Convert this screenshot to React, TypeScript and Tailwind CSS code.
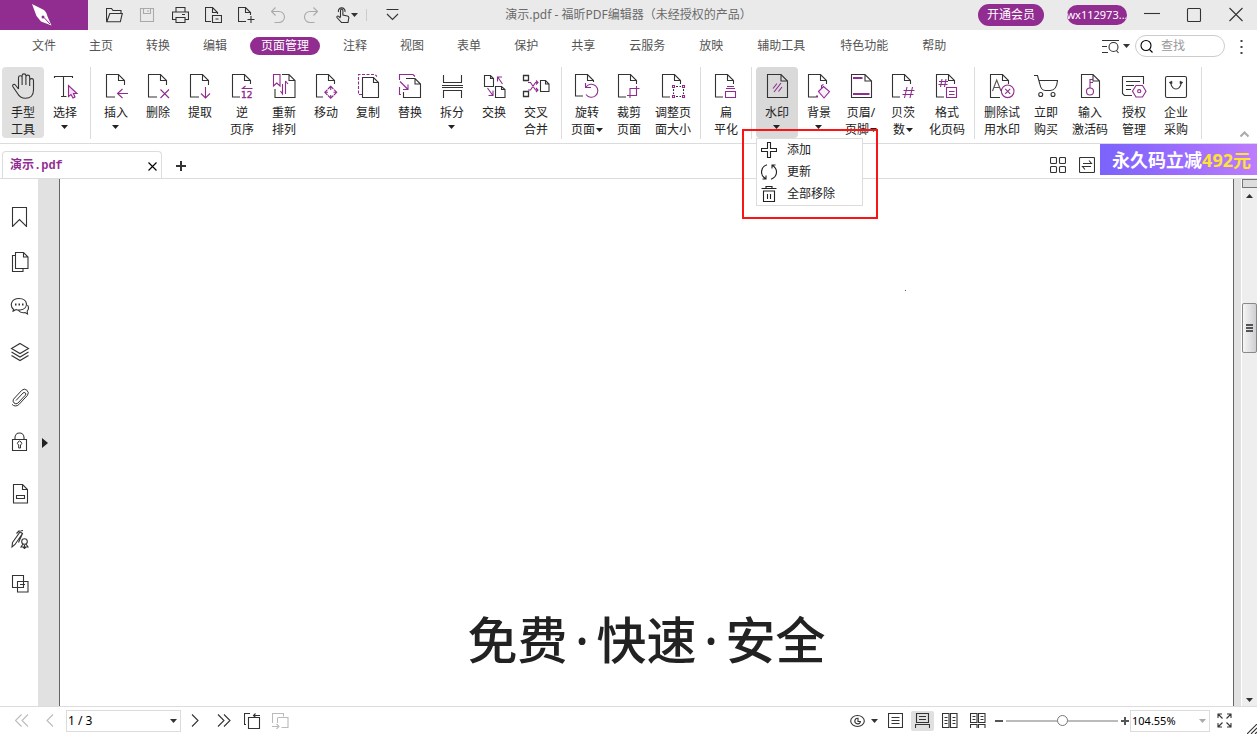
import { useState } from 'react';
import type { ReactNode } from 'react';
import clsx from 'clsx';

const PURPLE = '#8f2c8f';

type IconProps = { w: number; h: number; children: ReactNode };

const Icon = ({ w, h, children }: IconProps) => (
  <svg
    width={w}
    height={h}
    viewBox={`0 0 ${w} ${h}`}
    fill="none"
    stroke="currentColor"
    strokeWidth="1.1"
    className="block shrink-0"
    aria-hidden="true"
  >
    {children}
  </svg>
);

const Caret = () => (
  <svg width="7" height="4" viewBox="0 0 7 4" className="inline-block shrink-0" aria-hidden="true">
    <path d="M0 0h7L3.5 4z" fill="currentColor" />
  </svg>
);

// sheet with the lower right corner left open for a purple mark
const Sheet = () => <path d="M15 24H6.5V1.5h12l6 6V12M18.5 1.5v6h6" />;
const NarrowSheet = () => <path d="M13 24H5.5V1.5h12l6 6V11M17.5 1.5v6h6" />;
const FullSheet = () => <path d="M6.5 1.5H20l6.5 6.5v16.5h-20zM20 1.5V8h6.5" />;

type Tool = { id: string; lines: string[]; icon: ReactNode; caret?: 'below' | 'inline'; wide?: boolean };

const toolGroups: Tool[][] = [
  [
    {
      id: 'hand',
      lines: ['手型', '工具'],
      icon: (
        <path d="M11.5 16V4.5a1.8 1.8 0 0 1 3.6 0V12M15.1 12V2.8a1.9 1.9 0 0 1 3.8 0V12M18.9 12V4a1.9 1.9 0 0 1 3.8 0v9M22.7 13V7.5a1.9 1.9 0 0 1 3.8 0V17c0 5-3 8.3-8 8.3-4.5 0-6.5-2-8.3-5.3L5.8 13.5c-.8-2 1.4-3 2.6-1.5l3.1 4" />
      ),
    },
    {
      id: 'select',
      lines: ['选择'],
      caret: 'below',
      icon: (
        <>
          <path d="M5.5 5V3.5h18V5M14.5 3.5v20M12 23.5h5.5" />
          <path d="M19.5 12.5v11l2.5-2 2 3.5 2-1-1.5-3.5H28z" stroke={PURPLE} fill="#f6dcf6" />
        </>
      ),
    },
  ],
  [
    {
      id: 'insert',
      lines: ['插入'],
      caret: 'below',
      icon: <><Sheet /><path d="M28 20.5H18M22.5 16l-5 4.5 5 4.5" stroke={PURPLE} /></>,
    },
    {
      id: 'delete',
      lines: ['删除'],
      icon: <><Sheet /><path d="M18.5 16.5l8.500 8.500M27 16.500L18.500 25" stroke={PURPLE} /></>,
    },
    {
      id: 'extract',
      lines: ['提取'],
      icon: <><Sheet /><path d="M21.5 14v11M17 20.500l4.500 4.500 4.500-4.500" stroke={PURPLE} /></>,
    },
    {
      id: 'reverse',
      lines: ['逆', '页序'],
      icon: (
        <>
          <path d="M14 24H6.5V1.5h12l6 6V11M18.5 1.5v6h6" />
          <path d="M26.5 15.5h-10l3-2.500" stroke={PURPLE} />
          <text x="15" y="25" fontSize="9" fontFamily="DejaVu Sans" fill={PURPLE} stroke={PURPLE} strokeWidth="0.4">12</text>
        </>
      ),
    },
    {
      id: 'rearrange',
      lines: ['重新', '排列'],
      icon: (
        <>
          <path d="M14 1.5h7l6 6v17H7V16M21 1.5v6h6" />
          <path d="M5.5 1.5H12V13l-3.2-3-3.300 3zM14.500 11v10l-2-3M17.500 8v13M17.500 8l2.500 3" stroke={PURPLE} />
        </>
      ),
    },
    {
      id: 'move',
      lines: ['移动'],
      icon: (
        <>
          <path d="M13 24H6.5V1.5h12l6 6V11M18.5 1.5v6h6" />
          <path d="M18 16l2.7-2.7 2.7 2.7M18 22.5l2.7 2.7 2.7-2.7M17.5 16.700l-2.700 2.600 2.700 2.700M24 16.700l2.700 2.600L24 22M20.700 14v3M20.700 22v2.500M15.500 19.300h2.500M23.500 19.300H26" stroke={PURPLE} />
        </>
      ),
    },
    {
      id: 'copy',
      lines: ['复制'],
      icon: (
        <>
          <path d="M10 21.5H6.5v-20H23l2 2" stroke={PURPLE} strokeDasharray="3 1.5" />
          <path d="M10.5 4.5h11l5 5v15h-16zM21.5 4.5v5h5" />
        </>
      ),
    },
    {
      id: 'replace',
      lines: ['替换'],
      icon: (
        <>
          <path d="M5.5 7V1.5H19l2 2M5.5 14v7.5H7M6 8.5l8 8M14 11.5v5H9" stroke={PURPLE} />
          <path d="M12 5.5h9l5.5 5.5v13.5h-17V19M21 5.5V11h5.5" />
        </>
      ),
    },
    {
      id: 'split',
      lines: ['拆分'],
      caret: 'below',
      icon: <path d="M7.5 2v7.5h18V2M6 12.5h21M6 14.5h21M7.5 25v-7.5h18V25" />,
    },
    {
      id: 'swap',
      lines: ['交换'],
      icon: (
        <>
          <path d="M6.5 2.5h6l3 3v8h-9zM12.5 2.5v3h3M17.5 13.5h6l3.5 3v8h-9.5zM23.5 13.5v3H27" />
          <path d="M24.5 11L20 4.5M19.500 8.500V4H24M9.500 15l5 7M10.500 22.500H15v-5" stroke={PURPLE} />
        </>
      ),
    },
    {
      id: 'cross',
      lines: ['交叉', '合并'],
      icon: (
        <>
          <path d="M3.5 2.5h5v5h-5zM3.5 18.5h5v5h-5z" strokeWidth="1.3" />
          <path d="M20.5 7.5h5l3.5 3.5v7.5h-8.5zM25.5 7.5V11H29" />
          <path d="M8 9.5h2.5l5 7.5H18M8 17h2.5l5-7.5H18M16 7.5l2 2-2 2M16 15l2 2-2 2" stroke={PURPLE} />
        </>
      ),
    },
  ],
  [
    {
      id: 'rotate',
      lines: ['旋转', '页面'],
      caret: 'inline',
      icon: (
        <>
          <path d="M12 23H4.5V1.5h12l6 6V9M16.5 1.5v6h6" />
          <path d="M15 14a6.500 6.500 0 1 1 0 7.500M14.500 10v4.500H20" stroke={PURPLE} />
        </>
      ),
    },
    {
      id: 'crop',
      lines: ['裁剪', '页面'],
      icon: <><NarrowSheet /><path d="M14 22.500h9.500V13M26.500 15.500H17V25" stroke={PURPLE} /></>,
    },
    {
      id: 'resize',
      lines: ['调整页', '面大小'],
      wide: true,
      icon: (
        <>
          <NarrowSheet />
          <path d="M15.5 12.5h2v2h-2zM25.5 12.5h2v2h-2zM15.5 22.5h2v2h-2zM25.5 22.5h2v2h-2z" stroke={PURPLE} />
          <path d="M19 13.5h5M19 23.5h5M16.5 16v5M26.5 16v5" strokeDasharray="2 1.5" />
        </>
      ),
    },
  ],
  [
    {
      id: 'flatten',
      lines: ['扁', '平化'],
      icon: <><NarrowSheet /><path d="M17 13.5h7M16 15.5h9M15.5 18.5h10v6h-10z" stroke={PURPLE} /></>,
    },
  ],
  [
    {
      id: 'watermark',
      lines: ['水印'],
      caret: 'below',
      icon: <><FullSheet /><path d="M12 15.5l4-5M13 19l7-9M17.5 18.5l3.5-4.5" stroke={PURPLE} /></>,
    },
    {
      id: 'background',
      lines: ['背景'],
      caret: 'below',
      icon: (
        <>
          <NarrowSheet />
          <path d="M15.5 18.5l5-5 6 5-5.5 6.5zM18.5 15.500v-3l2-1" stroke={PURPLE} fill="#fbeffb" />
          <path d="M14 22.5v2" stroke={PURPLE} strokeWidth="2" />
        </>
      ),
    },
    {
      id: 'header',
      lines: ['页眉/', '页脚'],
      caret: 'inline',
      icon: <><FullSheet /><path d="M8 5h9.500M8 21h16.500" stroke={PURPLE} strokeWidth="2" /></>,
    },
    {
      id: 'bates',
      lines: ['贝茨', '数'],
      caret: 'inline',
      icon: <><NarrowSheet /><path d="M20 14l-2.500 11M25.500 14L23 25M16.500 17.500h11M15.500 21.500h11" stroke={PURPLE} /></>,
    },
    {
      id: 'format',
      lines: ['格式', '化页码'],
      wide: true,
      icon: (
        <>
          <NarrowSheet />
          <path d="M11 6l-1.500 8M15 6l-1.500 8M8 8.500h9M7.500 11.500h9M15.500 14.500h10v10h-10zM18 18.500h5.500M18 21.500h5.500" stroke={PURPLE} />
        </>
      ),
    },
  ],
  [
    {
      id: 'trial',
      lines: ['删除试', '用水印'],
      wide: true,
      icon: (
        <>
          <path d="M14 24.5H4.5v-23h12l6 6V11M16.5 1.5v6h6" />
          <path d="M6.5 18l4.2-11L15 18M8 14.5h5.500" stroke="#555" />
          <circle cx="21.7" cy="18.3" r="6.3" stroke={PURPLE} />
          <path d="M19.2 15.8l5 5M24.2 15.8l-5 5" stroke={PURPLE} />
        </>
      ),
    },
    {
      id: 'buy',
      lines: ['立即', '购买'],
      icon: (
        <>
          <path d="M4 2.5h3.500l2.500 9c.7 3.800 2.500 6 5.500 6H20c4 0 7-3.500 7.500-10H9" />
          <circle cx="10.7" cy="21.5" r="2" />
          <circle cx="23" cy="21.5" r="2" />
        </>
      ),
    },
    {
      id: 'activate',
      lines: ['输入', '激活码'],
      wide: true,
      icon: (
        <>
          <path d="M7.5 1.5H19L25.500 8v16.500h-18zM19 1.500V8h6.500" />
          <path d="M16 15V6.5h3M16 9.5h3" stroke={PURPLE} />
          <circle cx="16" cy="18.5" r="3.5" stroke={PURPLE} />
        </>
      ),
    },
    {
      id: 'license',
      lines: ['授权', '管理'],
      icon: (
        <>
          <path d="M14 22.5H6.5l-2-2v-17h21V11M8 8.5h14M8 12.5h8M8 16.5h5" />
          <path d="M18 12.5h6.5l3.5 5.700-3.500 5.800H18l-3.500-5.800z" stroke={PURPLE} />
          <circle cx="21.2" cy="18.2" r="1.6" stroke={PURPLE} />
        </>
      ),
    },
    {
      id: 'enterprise',
      lines: ['企业', '采购'],
      icon: (
        <>
          <rect x="5.5" y="3.5" width="21" height="21" rx="1.5" />
          <path d="M10.5 9.5c1 4.500 3 6.500 5.500 6.500s4.500-2 5.500-6.500" />
          <path d="M9 9.500L12 8v3zM23 9.500L20 8v3z" fill="currentColor" strokeWidth="0.5" />
        </>
      ),
    },
  ],
];

const quickActions = [
  { label: '打开', icon: <path d="M.5 14.5v-13h5l1.5 2h8v3M.8 14.800l3-8.300h12.500l-2 8.300z" /> },
  { label: '保存', muted: true, icon: <path d="M1.5 1.5h13v13h-13zM4.5 1.5v5h7v-5M8 4h2" /> },
  { label: '打印', icon: <path d="M4 5V.5h9V5M4 12.5H.5V5h16v7.5H13M4 10.5h9v5H4zM10 7.5h3" /> },
  { label: '导出', icon: <path d="M6 14.5H.5V.5h7l5 5V7M7.5.5v5h5M7.5 8.5h9v7h-9zM10.5 12h3" /> },
  { label: '新建', icon: <path d="M8 14.5H.5V.5h7l5 5V8M7.5.5v5h5M13 9v7M9.5 12.5h7" /> },
  { label: '撤销', muted: true, icon: <path d="M3.5 15.5H8a5.500 5.500 0 0 0 0-11H.5M4.5.5l-4 4 4 4" /> },
  { label: '重做', muted: true, icon: <path d="M10.5 15.5H6a5.500 5.500 0 0 1 0-11h7.500M9.500.5l4 4-4 4" /> },
];

const menus = ['文件', '主页', '转换', '编辑', '页面管理', '注释', '视图', '表单', '保护', '共享', '云服务', '放映', '辅助工具', '特色功能', '帮助'];

const watermarkActions = [
  { label: '添加', icon: <path d="M6.500.5h3v6h6v3h-6v6h-3v-6h-6v-3h6z" /> },
  {
    label: '更新',
    icon: <path d="M6 .8C2.500 2 .5 4.500.5 8c0 3 1.500 5 4 6.500M1.500 15H5v-3.500M10 15.200c3.500-1.200 5.500-3.700 5.500-7.200 0-3-1.500-5-4-6.500M14.500 1H11v3.500" />,
  },
  { label: '全部移除', icon: <path d="M.5 2.500h15M5 2.500v-2h6v2M2.500 5v10.500h11V5zM6.500 8v5M9.500 8v5" /> },
];

const panels = [
  { label: '书签', icon: <path d="M2.5.5h14v19l-7-7-7 7z" /> },
  { label: '页面', icon: <path d="M5.5.5h8L18 5v11.500H5.500zM13.500.5V5H18M5.500 3.500h-3v16h10.500v-3" /> },
  {
    label: '注释',
    icon: (
      <>
        <path d="M4 13C-.5 9.500.5 1.500 9 1.500c9.500 0 10 10.500 1 11.500-1.500.2-3 0-4-.5l-3.500 2zM8.500 13.500c1.500 2 4 2.500 6.500 2l2.500 1.500-.3-3c1.800-2 1.300-4.500.3-6" />
        <path d="M5 7.500h1.500M8.500 7.500H10M12 7.500h1.500" strokeWidth="1.8" />
      </>
    ),
  },
  { label: '图层', icon: <path d="M10 1.500l8.500 5-8.500 5-8.500-5zM1.500 10l8.500 5 8.500-5M1.500 13.500l8.500 5 8.500-5" /> },
  {
    label: '附件',
    icon: (
      <path
        d="M6 13.500l7-7.500a1.600 1.600 0 0 1 2.400 2.200l-7.600 8a3 3 0 0 1-4.300-4l8.200-8.800a3.800 3.800 0 0 1 5.700 5l-8.600 9.200a4.600 4.600 0 0 1-6.700-.2"
        strokeWidth="1"
      />
    ),
  },
  {
    label: '安全',
    icon: (
      <>
        <path d="M2.500 7.500h14v11h-14zM5 7.500v-2a4.500 4.500 0 0 1 9 0v2" />
        <path d="M8.700 13a2 2 0 1 1 1.800 0v3H8.700z" strokeWidth="1" />
      </>
    ),
  },
  { label: '字段', gap: true, icon: <path d="M3.500.5h9l5 5v13.500h-14zM12.500.5v5h5M6.500 11.500h8v3h-8z" /> },
  {
    label: '签名',
    icon: (
      <>
        <path d="M2.500 13.500L10 3l2.500 1.500L5 15.500l-3 2.500zM6.500 4.500l3-3M8.500 13.500l4-9M10.500 2l2.500-.5" />
        <circle cx="14.500" cy="12.500" r="2.800" />
        <path d="M13 15l-2 3h2l1 1 .5-3 .5 3 1-1h2l-2-3" />
      </>
    ),
  },
  { label: '对比', icon: <path d="M7.500 13.500h-5v-12h11v6M7.500 7.500H18V18H7.500zM10 10.500h5M7.500 13.500h6v-6" /> },
];

const SmallButton = ({ label, className, children }: { label: string; className?: string; children: ReactNode }) => (
  <button type="button" aria-label={label} className={clsx('flex shrink-0 items-center justify-center', className)}>
    {children}
  </button>
);

const TitleBar = () => (
  <header className="flex h-[30px] shrink-0 bg-[#eaeaea] text-[#333]">
    <div className="flex flex-1 basis-0 items-center">
      <div className="flex h-full w-[88px] items-center justify-center bg-[#912d91]">
        <svg width="24" height="24" viewBox="0 0 24 24" className="mr-1" aria-label="福昕">
          <path d="M2 1l12 6c2 2 3 4 3.500 6.500L21.500 22.500 11 18.500 6.500 13z" fill="#fff" />
          <path d="M20 21l-6-6.500" stroke="#912d91" strokeWidth="1" />
          <circle cx="13" cy="14" r="1.5" fill="#912d91" />
        </svg>
      </div>
      <div className="flex h-full items-center pl-[10px]">
        {quickActions.map((a) => (
          <SmallButton key={a.label} label={a.label} className={clsx('h-full w-[33px]', a.muted && 'text-[#aaa]')}>
            <Icon w={17} h={16}>{a.icon}</Icon>
          </SmallButton>
        ))}
        <SmallButton label="触摸模式" className="h-full w-9 gap-px">
          <Icon w={14} h={16}>
            <path d="M4.5 10V3.500a1.200 1.200 0 0 1 2.400 0V8l4.500 1c1.200.3 1.600 1 1.400 2l-.8 4.500H5.500L1 10.500c-.5-1.200.8-2 1.700-1.200L4.500 11M2.500 5a3.300 3.300 0 1 1 6.400 0" />
          </Icon>
          <Caret />
        </SmallButton>
        <span className="ml-px h-3 w-px bg-[#ccc]" />
        <SmallButton label="自定义工具栏" className="h-full w-[51px]">
          <Icon w={13} h={12}>
            <path d="M.5.5h12M1 5l5.500 5.500L12 5" />
          </Icon>
        </SmallButton>
      </div>
    </div>
    <h1 className="self-center text-[12px] leading-4 whitespace-nowrap text-[#6a6a6a]">
      演示.pdf - 福昕PDF编辑器（未经授权的产品）
    </h1>
    <div className="flex flex-1 basis-0 items-center justify-end">
      <button type="button" className="h-[22px] w-[66px] shrink-0 rounded-full bg-[#912d91] text-[12px] leading-4 text-white">
        开通会员
      </button>
      <button
        type="button"
        className="mr-1 ml-[23px] flex h-5 w-[60px] shrink-0 items-center justify-center overflow-hidden rounded-full bg-[#912d91] text-[11px] leading-4 text-white"
      >
        wx112973...
      </button>
      <SmallButton label="最小化" className="h-full w-[42px]">
        <Icon w={16} h={16}><path d="M0 6.500h16" /></Icon>
      </SmallButton>
      <SmallButton label="最大化" className="h-full w-[42px]">
        <Icon w={16} h={16}><rect x="1.5" y="1.5" width="13" height="13" rx="1" /></Icon>
      </SmallButton>
      <SmallButton label="关闭" className="h-full w-[42px]">
        <Icon w={16} h={16}><path d="M1.500 1l13 13M14.500 1l-13 13" /></Icon>
      </SmallButton>
    </div>
  </header>
);

const MenuBar = () => (
  <div className="flex h-8 shrink-0 items-center">
    <nav className="flex gap-[33px] pl-8 text-[12px] leading-4 whitespace-nowrap text-[#555]">
      {menus.map((m) => (
        <button
          key={m}
          type="button"
          className={clsx(
            m === '页面管理' ? '-mx-[10px] -my-px rounded-full bg-[#912d91] px-[11px] py-px text-white' : m.length > 2 && 'px-px',
          )}
        >
          {m}
        </button>
      ))}
    </nav>
    <div className="ml-auto flex items-center">
      <SmallButton label="查找选项" className="mr-[5px] gap-1 text-[#333]">
        <Icon w={17} h={16}>
          <path d="M0 2.500h17M0 8.500h5M0 14.500h6" />
          <circle cx="11.500" cy="9" r="4.500" />
          <path d="M14.500 12.500l2 2.500" />
        </Icon>
        <Caret />
      </SmallButton>
      <label className="flex h-[22px] w-[90px] items-center rounded-full border border-[#ccc] bg-white pl-1">
        <Icon w={13} h={14}>
          <circle cx="6" cy="6.500" r="5" />
          <path d="M9.500 10.500l3 3" />
        </Icon>
        <input
          type="text"
          aria-label="查找"
          placeholder="查找"
          className="ml-2 h-4 w-[60px] min-w-0 bg-transparent text-[12px] leading-4 outline-none placeholder:text-[#999]"
        />
      </label>
      <SmallButton label="更多" className="h-5 w-8">
        <svg width="3" height="15" viewBox="0 0 3 15" fill="#444" aria-hidden="true">
          <path d="M.5 1h2v2h-2zM.5 7h2v2h-2zM.5 13h2v2h-2z" />
        </svg>
      </SmallButton>
    </div>
  </div>
);

const Ribbon = () => {
  const [menuOpen, setMenuOpen] = useState(true);

  return (
    <div className="flex h-[82px] shrink-0 border-b border-[#dcdcdc] pt-[5px] pl-[2px]">
      {toolGroups.map((group) => (
        <div key={group[0].id} className="flex shrink-0">
          {group.map((tool) => {
            const isWatermark = tool.id === 'watermark';
            return (
              <div key={tool.id} className="relative">
                <button
                  type="button"
                  onClick={isWatermark ? () => setMenuOpen(!menuOpen) : undefined}
                  className={clsx(
                    'flex h-[71px] flex-col items-center rounded-sm pt-[6px] text-[#333]',
                    tool.wide ? 'w-[46px]' : 'w-[42px]',
                    tool.id === 'hand' && 'bg-[#e0e0e0]',
                    isWatermark && 'bg-[#d9d9d9]',
                  )}
                >
                  <Icon w={32} h={26}>{tool.icon}</Icon>
                  <span className="mt-[5px] block text-[12px] leading-[17px] whitespace-nowrap text-[#222]">
                    <span className="block">{tool.lines[0]}</span>
                    {tool.lines[1] && (
                      <span className="flex items-center justify-center gap-px">
                        {tool.lines[1]}
                        {tool.caret === 'inline' && <Caret />}
                      </span>
                    )}
                    {tool.caret === 'below' && (
                      <span className="flex h-3 items-center justify-center"><Caret /></span>
                    )}
                  </span>
                </button>
                {isWatermark && menuOpen && (
                  <>
                    <div role="menu" className="absolute top-[71px] left-0 z-10 w-[107px] border border-[#dcdcdc] bg-white">
                      {watermarkActions.map((a) => (
                        <button
                          key={a.label}
                          type="button"
                          role="menuitem"
                          className="flex h-[22px] w-full items-center gap-[10px] pl-1 text-[12px] leading-4 whitespace-nowrap text-[#222]"
                        >
                          <Icon w={16} h={16}>{a.icon}</Icon>
                          {a.label}
                        </button>
                      ))}
                    </div>
                    <div className="pointer-events-none absolute top-[62px] -left-[14px] z-20 h-[90px] w-[136px] border-2 border-[#fb1414]" />
                  </>
                )}
              </div>
            );
          })}
          <span className="mx-1 h-[72px] w-px bg-[#dcdcdc]" />
        </div>
      ))}
      <SmallButton label="折叠功能区" className="mr-2 mb-1 ml-auto self-end text-[#aaa]">
        <svg width="9" height="9" viewBox="0 0 9 9" fill="none" stroke="currentColor" strokeWidth="2" aria-hidden="true">
          <path d="M.5 6.500l4-4 4 4" />
        </svg>
      </SmallButton>
    </div>
  );
};

const TabStrip = () => (
  <div className="flex h-[35px] shrink-0 border-b border-[#dcdcdc]">
    <div className="mt-[7px] ml-[2px] flex w-[160px] items-center justify-between rounded-t-[4px] border border-b-0 border-[#dcdcdc] pt-[2px] pr-1 pl-[7px]">
      <a href="#doc" className="font-['Liberation_Mono','Noto_Sans_CJK_SC',monospace] text-[12px] leading-4 font-bold text-[#912d91]">
        演示.pdf
      </a>
      <SmallButton label="关闭标签">
        <Icon w={9} h={9}><path d="M.5.5l8 8M8.500.5l-8 8" /></Icon>
      </SmallButton>
    </div>
    <SmallButton label="新建标签" className="mt-[9px] ml-[13px]">
      <svg width="12" height="12" viewBox="0 0 12 12" stroke="#333" strokeWidth="2" aria-hidden="true">
        <path d="M6 1v10M1 6h10" />
      </svg>
    </SmallButton>
    <div className="ml-auto flex text-[#333]">
      <SmallButton label="缩略图" className="mt-[7px] mr-[13px]">
        <Icon w={16} h={16}>
          <rect x=".5" y=".5" width="6" height="6" rx="1" />
          <rect x="9.500" y=".5" width="6" height="6" rx="1" />
          <rect x=".5" y="9.500" width="6" height="6" rx="1" />
          <rect x="9.500" y="9.500" width="6" height="6" rx="1" />
        </Icon>
      </SmallButton>
      <SmallButton label="切换" className="mt-[7px] mr-[5px]">
        <Icon w={16} h={16}>
          <rect x=".5" y=".5" width="15" height="15" rx="1" />
          <path d="M4 6.500h8.500l-2.500-3M12 9.500H3.500l2.500 3" />
        </Icon>
      </SmallButton>
      <a
        href="#promo"
        className="flex h-[31px] w-[157px] items-center justify-end bg-linear-to-r from-[#7a63fb] via-[#9a6cff] to-[#bd7cfd] pr-[6px] text-[18px] leading-6 font-bold whitespace-nowrap text-white"
      >
        永久码立减<span className="text-[#ffe234]">492元</span>
      </a>
    </div>
  </div>
);

const ScrollBar = () => (
  <div className="flex w-4 shrink-0 flex-col items-center border-l border-white bg-[#eee] text-[#333]">
    <div className="h-[9px] w-full shrink-0 border border-r-0 border-[#777] bg-[#ddd]" />
    <span className="mt-[6px] flex rotate-180"><Caret /></span>
    <div className="flex min-h-0 w-full flex-1 flex-col">
      <div className="basis-[21%]" />
      <div className="flex h-[50px] shrink-0 flex-col items-center justify-center gap-px rounded-xs border border-[#888] bg-linear-to-r from-[#f6f6f6] to-[#cfcfd2]">
        <span className="h-[2px] w-[7px] bg-[#555]" />
        <span className="h-[2px] w-[7px] bg-[#555]" />
        <span className="h-[2px] w-[7px] bg-[#555]" />
      </div>
    </div>
    <span className="mb-1 flex"><Caret /></span>
  </div>
);

const Workspace = () => (
  <div className="flex min-h-0 flex-1">
    <aside className="flex w-[38px] shrink-0 flex-col items-center pt-[15px] pl-[2px] text-[#333]">
      {panels.map((p) => (
        <SmallButton key={p.label} label={p.label} className={clsx('h-[45px] w-full', p.gap && 'mt-[7px]')}>
          <Icon w={20} h={20}>{p.icon}</Icon>
        </SmallButton>
      ))}
    </aside>
    <SmallButton label="展开面板" className="w-[21px] bg-[#e1e1e1] pr-2">
      <svg width="6" height="10" viewBox="0 0 6 10" aria-hidden="true"><path d="M0 0l6 5-6 5z" fill="#222" /></svg>
    </SmallButton>
    <main id="doc" className="relative flex min-w-0 flex-1 items-end justify-center border-x border-[#666] pb-[41px]">
      <span className="absolute top-[21%] left-[72%] size-px bg-[#555]" />
      <p className="flex text-[50px] leading-[50px] font-medium whitespace-nowrap text-[#222]">
        免费<span className="w-[29px] text-center">·</span>快速<span className="w-[29px] text-center">·</span>安全
      </p>
    </main>
    <div className="w-[7px] shrink-0 bg-[#e1e1e1]" />
    <ScrollBar />
  </div>
);

const StatusBar = () => {
  const [page, setPage] = useState('1 / 3');
  const [zoom, setZoom] = useState(50);

  return (
    <footer className="flex h-7 shrink-0 items-center border-t border-[#dcdcdc] text-[#333]">
      <SmallButton label="第一页" className="ml-[15px] text-[#bbb]">
        <Icon w={14} h={13}><path d="M6.500.5l-6 6 6 6M13 .5l-6 6 6 6" /></Icon>
      </SmallButton>
      <SmallButton label="上一页" className="ml-[17px] text-[#bbb]">
        <Icon w={8} h={13}><path d="M7 .5l-6 6 6 6" /></Icon>
      </SmallButton>
      <div className="ml-3 flex h-[22px] w-[115px] items-center border border-[#dcdcdc]">
        <select
          aria-label="页码"
          value={page}
          onChange={(e) => setPage(e.target.value)}
          className="h-4 w-[103px] appearance-none bg-transparent pl-px text-[12px] leading-4 text-black outline-none"
        >
          <option>1 / 3</option>
          <option>2 / 3</option>
          <option>3 / 3</option>
        </select>
        <Caret />
      </div>
      <SmallButton label="下一页" className="ml-[10px]">
        <Icon w={8} h={13}><path d="M1 .5l6 6-6 6" /></Icon>
      </SmallButton>
      <SmallButton label="最后一页" className="ml-[18px]">
        <Icon w={14} h={13}><path d="M1 .5l6 6-6 6M7 .5l6 6-6 6" /></Icon>
      </SmallButton>
      <SmallButton label="上一视图" className="ml-[13px]">
        <Icon w={17} h={16}><path d="M6 .5H.5v11H2M4.500 4.500h11v11h-11zM16 2.500H9.500M11.500.5l-2 2 2 2" /></Icon>
      </SmallButton>
      <SmallButton label="下一视图" className="ml-[11px] text-[#bbb]">
        <Icon w={17} h={16}><path d="M.5 10V.5h11v3M6 4.500h10v10H9.500M5.500 10V4.500M0 13.500h6.500M4.500 11l2.500 2.500L4.500 16" /></Icon>
      </SmallButton>

      <div className="ml-auto flex h-full items-center">
        <SmallButton label="护眼模式" className="gap-[6px]">
          <Icon w={15} h={14}>
            <ellipse cx="7.500" cy="7" rx="6.800" ry="5.500" />
            <path d="M8 4.300a2.800 2.800 0 1 0 2.400 3.200H8z" />
          </Icon>
          <Caret />
        </SmallButton>
        <SmallButton label="单页" className="ml-[10px]">
          <Icon w={15} h={15}><path d="M.5.5h14v14H.5zM3.500 4.500h8M3.500 7.500h8M3.500 10.500h8" /></Icon>
        </SmallButton>
        <SmallButton label="连续" className="ml-2 h-5 w-[23px] rounded-xs bg-[#e0e0e0]">
          <Icon w={15} h={15}><path d="M1.500.5h12v9h-12zM4 3.500h7M4 6.500h7M.5 15v-3.500h14V15" /></Icon>
        </SmallButton>
        <SmallButton label="双页" className="ml-2">
          <Icon w={16} h={15}><path d="M.5.5H7v14H.5zM8.500.5H15v14H8.500zM2.500 4.500h3M2.500 7.500h3M2.500 10.500h3M10.500 4.500h3M10.500 7.500h3M10.500 10.500h3" /></Icon>
        </SmallButton>
        <SmallButton label="连续双页" className="ml-3">
          <Icon w={16} h={15}><path d="M.5.5H7v9H.5zM8.500.5H15v9H8.500zM2.500 3.500h3M2.500 6.500h3M10.500 3.500h3M10.500 6.500h3M.5 15v-3.500H7V15M8.500 15v-3.500H15V15" /></Icon>
        </SmallButton>
        <SmallButton label="缩小" className="ml-[9px]">
          <svg width="8" height="8" viewBox="0 0 8 8" stroke="#555" strokeWidth="2" aria-hidden="true"><path d="M0 4h8" /></svg>
        </SmallButton>
        <input
          type="range"
          aria-label="缩放"
          value={zoom}
          onChange={(e) => setZoom(Number(e.target.value))}
          className="mx-[3px] h-[2px] w-[112px] appearance-none bg-[#bbb] [&::-webkit-slider-thumb]:size-[11px] [&::-webkit-slider-thumb]:appearance-none [&::-webkit-slider-thumb]:rounded-full [&::-webkit-slider-thumb]:border [&::-webkit-slider-thumb]:border-[#777] [&::-webkit-slider-thumb]:bg-white"
        />
        <SmallButton label="放大">
          <svg width="8" height="8" viewBox="0 0 8 8" stroke="#555" strokeWidth="2" aria-hidden="true"><path d="M0 4h8M4 0v8" /></svg>
        </SmallButton>
        <div className="ml-px flex h-[22px] w-20 items-center border border-[#dcdcdc] text-[#aaa]">
          <select
            aria-label="缩放比例"
            className="h-4 w-[68px] appearance-none bg-transparent pl-px text-[11px] leading-4 text-black outline-none"
          >
            <option>104.55%</option>
            <option>100%</option>
          </select>
          <Caret />
        </div>
        <SmallButton label="全屏" className="ml-[7px]">
          <Icon w={15} h={15}>
            <path d="M5.500 5.500L1 1M1 5V1h4M9.500 5.500L14 1M10 1h4v4M5.500 9.500L1 14M1 10v4h4M9.500 9.500L14 14M14 10v4h-4" />
          </Icon>
        </SmallButton>
        <span className="ml-[15px] self-end">
          <Icon w={10} h={10}><path d="M0 10L10 0M4 10l6-6M8 10l2-2" /></Icon>
        </span>
      </div>
    </footer>
  );
};

const App = () => (
  <div className="flex h-screen flex-col overflow-hidden bg-white font-['Noto_Sans','Noto_Sans_CJK_SC',sans-serif]">
    <TitleBar />
    <MenuBar />
    <Ribbon />
    <TabStrip />
    <Workspace />
    <StatusBar />
  </div>
);

export default App;
